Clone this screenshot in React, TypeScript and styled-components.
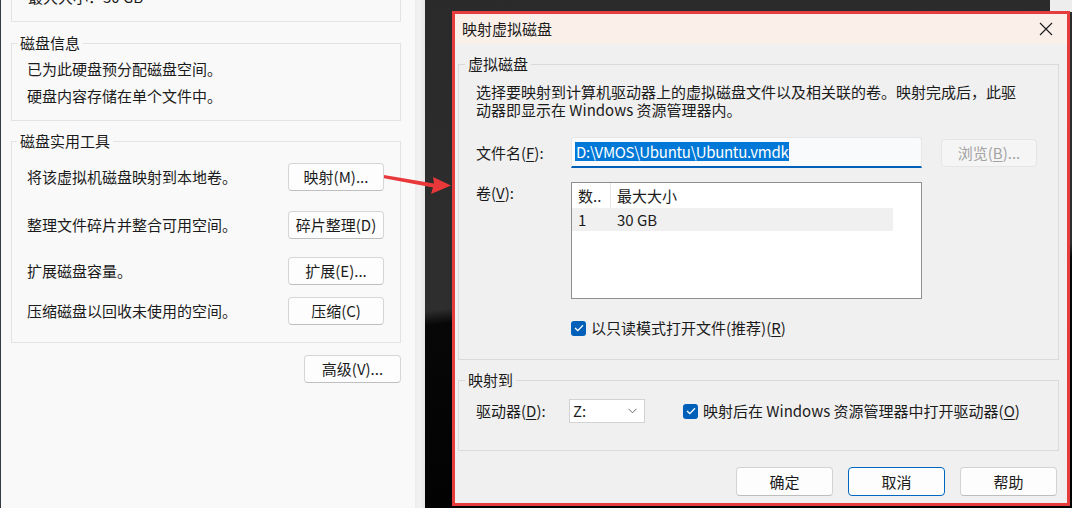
import React from "react";
import styled, { createGlobalStyle } from "styled-components";

const uiFont = `"Segoe UI", "Noto Sans CJK SC", "Noto Sans", sans-serif`;

const GlobalStyle = createGlobalStyle`
  html, body {
    margin: 0;
    padding: 0;
    background: #2b2b2b;
  }
  body {
    font-family: ${uiFont};
    color: #1b1b1b;
  }
`;

const Screen = styled.div`
  position: relative;
  display: flex;
  width: 1072px;
  height: 508px;
  overflow: hidden;
  font-size: 15px;
  line-height: 20px;
`;

/* ---------- left: disk settings pane ---------- */

const LeftPane = styled.div`
  flex: none;
  width: 415px;
  box-sizing: border-box;
  display: flex;
  flex-direction: column;
  padding: 0 14px 0 10px;
  background: #f9f9f9;
  border-left: 1px solid #343b44;
`;

const CutFrame = styled.div`
  height: 22px;
  box-sizing: border-box;
  border: 1px solid #e3e3e3;
  border-top: none;
  padding-left: 16px;
`;

const CutText = styled.div`
  margin-top: -13px;
`;

const Group = styled.fieldset<{ $pad: string; $top: number; $border: string }>`
  margin: ${(p) => p.$top}px 0 0 0;
  padding: ${(p) => p.$pad};
  border: 1px solid ${(p) => p.$border};
  border-radius: 0;
  min-width: 0;
`;

const Legend = styled.legend<{ $shift: number }>`
  margin-left: ${(p) => p.$shift}px;
  padding: 0 3px;
  line-height: 20px;
`;

const InfoLine = styled.div`
  line-height: 27px;
`;

const ToolRow = styled.div<{ $top: number }>`
  display: flex;
  align-items: center;
  justify-content: space-between;
  margin-top: ${(p) => p.$top}px;
`;

const PaneButton = styled.button<{ $w?: number }>`
  width: ${(p) => p.$w ?? 96}px;
  height: 28px;
  box-sizing: border-box;
  padding: 0;
  font: inherit;
  font-size: 15px;
  line-height: 20px;
  color: #1b1b1b;
  background: #fdfdfd;
  border: 1px solid #d6d6d6;
  border-bottom-color: #bfbfbf;
  border-radius: 4px;
`;

const AdvancedButton = styled(PaneButton)`
  align-self: flex-end;
  margin-top: 12px;
`;

const Gutter = styled.div`
  flex: none;
  width: 10px;
  background: linear-gradient(to right, #ececec, #f2f2f2 40%, #e6e6e6);
`;

/* ---------- right: desktop with the dialog ---------- */

const Desktop = styled.div`
  flex: 1;
  min-width: 0;
  display: flex;
  padding: 11px 2px 2px 27px;
  background:
    linear-gradient(#ededed, #ededed) right top / 22px 12px no-repeat,
    linear-gradient(174deg, #2a2a2a 0%, #2e2e2e 54%, #070707 56.5%, #000 100%);
`;

const Dialog = styled.div`
  flex: 1;
  min-width: 0;
  display: flex;
  flex-direction: column;
  border: 3px solid #e53c3e;
  background: #f0f0f0;
`;

const TitleBar = styled.div`
  flex: none;
  height: 30px;
  display: flex;
  align-items: center;
  justify-content: space-between;
  padding: 0 14px 0 7px;
  background: #faf0e9;
`;

const DialogBody = styled.div`
  flex: 1;
  display: flex;
  flex-direction: column;
  padding: 10px 8px 7px 3px;
`;

const Description = styled.p`
  margin: 0;
  line-height: 18px;
`;

const FieldGrid = styled.div`
  display: grid;
  grid-template-columns: 95px 351px auto;
  margin-top: 18px;
`;

const FieldLabel = styled.div<{ $top?: number }>`
  margin-top: ${(p) => p.$top ?? 0}px;
  align-self: ${(p) => (p.$top === undefined ? "center" : "start")};
`;

const FileInput = styled.div`
  height: 31px;
  box-sizing: border-box;
  display: flex;
  align-items: center;
  padding: 0 3px 1px;
  background: #f8fafc;
  border: 1px solid #e6e6e6;
  border-bottom: 2px solid #005fb8;
  border-radius: 3px 3px 0 0;
  white-space: nowrap;
`;

const Selected = styled.span`
  background: #0078d7;
  color: #fff;
  padding: 0 1px;
  line-height: 19px;
  letter-spacing: -0.3px;
`;

const DisabledButton = styled.div`
  align-self: center;
  width: 96px;
  height: 28px;
  margin-left: 19px;
  box-sizing: border-box;
  display: flex;
  align-items: center;
  justify-content: center;
  color: #a3a3a3;
  background: #f5f5f5;
  border: 1px solid #e5e5e5;
  border-radius: 4px;
`;

const ListBox = styled.div`
  grid-column: 2;
  height: 117px;
  box-sizing: border-box;
  margin-top: 14px;
  background: #fff;
  border: 1px solid #8f8f8f;
`;

const ListRow = styled.div<{ $header?: boolean }>`
  display: grid;
  grid-template-columns: 39px 282px;
  width: 321px;
  height: ${(p) => (p.$header ? 25 : 23)}px;
  background: ${(p) => (p.$header ? "#fff" : "#f0f0f0")};
`;

const Cell = styled.div<{ $divider?: boolean }>`
  display: flex;
  align-items: center;
  padding-left: 6px;
  border-right: ${(p) => (p.$divider ? "1px solid #e5e5e5" : "none")};
  white-space: nowrap;
  overflow: hidden;
`;

const CheckRow = styled.label<{ $col?: number; $top?: number }>`
  grid-column: ${(p) => p.$col ?? "auto"};
  display: flex;
  align-items: center;
  gap: 5px;
  margin-top: ${(p) => p.$top ?? 0}px;
  white-space: nowrap;
`;

const Box = styled.span`
  flex: none;
  width: 15px;
  height: 15px;
  border-radius: 3px;
  background: #005fb8;
  display: flex;
  align-items: center;
  justify-content: center;
`;

const DriveRow = styled.div`
  display: flex;
  align-items: center;
  height: 24px;
`;

const DriveLabel = styled.div`
  width: 93px;
`;

const Select = styled.div`
  flex: none;
  width: 76px;
  height: 24px;
  box-sizing: border-box;
  display: flex;
  align-items: center;
  justify-content: space-between;
  padding: 0 7px 0 3px;
  background: #fff;
  border: 1px solid #d2d2d2;
  margin-right: 38px;
`;

const ButtonBar = styled.div`
  display: flex;
  justify-content: flex-end;
  gap: 15px;
  margin-top: 16px;
  padding-right: 2px;
`;

const DialogButton = styled.button<{ $focus?: boolean }>`
  width: 97px;
  height: 29px;
  box-sizing: border-box;
  padding: 0;
  font: inherit;
  font-size: 15px;
  line-height: 20px;
  color: #1b1b1b;
  background: #fdfdfd;
  border: 1px solid ${(p) => (p.$focus ? "#0067c0" : "#d3d3d3")};
  border-bottom-color: ${(p) => (p.$focus ? "#0067c0" : "#bdbdbd")};
  border-radius: 4px;
`;

const U = styled.span`
  text-decoration: underline;
  text-underline-offset: 2px;
`;

const ArrowSvg = styled.svg`
  position: absolute;
  left: 380px;
  top: 165px;
  width: 80px;
  height: 35px;
  pointer-events: none;
`;

const Check = () => (
  <svg width="10" height="8" viewBox="0 0 10 8">
    <polyline points="1,4 3.8,6.6 9,1.2" fill="none" stroke="#fff" strokeWidth="1.3" />
  </svg>
);

const Close = () => (
  <svg width="14" height="14" viewBox="0 0 14 14">
    <path d="M1 1 L13 13 M13 1 L1 13" stroke="#1a1a1a" strokeWidth="1.1" />
  </svg>
);

const Chevron = () => (
  <svg width="9" height="6" viewBox="0 0 9 6">
    <polyline points="0.5,0.8 4.5,4.8 8.5,0.8" fill="none" stroke="#6b6b6b" strokeWidth="1" />
  </svg>
);

const tools = [
  { text: "将该虚拟机磁盘映射到本地卷。", btn: "映射(M)...", top: 12 },
  { text: "整理文件碎片并整合可用空间。", btn: "碎片整理(D)", top: 20 },
  { text: "扩展磁盘容量。", btn: "扩展(E)...", top: 18 },
  { text: "压缩磁盘以回收未使用的空间。", btn: "压缩(C)", top: 12 },
];

export default function App() {
  return (
    <Screen>
      <GlobalStyle />
      <LeftPane>
        <CutFrame>
          <CutText>最大大小：30 GB</CutText>
        </CutFrame>
        <Group $top={11} $pad="2px 15px 11px 15px" $border="#e3e3e3">
          <Legend $shift={-10}>磁盘信息</Legend>
          <InfoLine>已为此硬盘预分配磁盘空间。</InfoLine>
          <InfoLine>硬盘内容存储在单个文件中。</InfoLine>
        </Group>
        <Group $top={10} $pad="0 16px 17px 15px" $border="#e3e3e3">
          <Legend $shift={-10}>磁盘实用工具</Legend>
          {tools.map((t) => (
            <ToolRow key={t.btn} $top={t.top}>
              <span>{t.text}</span>
              <PaneButton>{t.btn}</PaneButton>
            </ToolRow>
          ))}
        </Group>
        <AdvancedButton $w={97}>高级(V)...</AdvancedButton>
      </LeftPane>
      <Gutter />
      <Desktop>
        <Dialog>
          <TitleBar>
            <span>映射虚拟磁盘</span>
            <Close />
          </TitleBar>
          <DialogBody>
            <Group $top={0} $pad="9px 10px 21px 17px" $border="#dadada">
              <Legend $shift={-11}>虚拟磁盘</Legend>
              <Description>
                选择要映射到计算机驱动器上的虚拟磁盘文件以及相关联的卷。映射完成后，此驱
                <br />
                动器即显示在 Windows 资源管理器内。
              </Description>
              <FieldGrid>
                <FieldLabel>
                  文件名(<U>F</U>):
                </FieldLabel>
                <FileInput>
                  <Selected>D:\VMOS\Ubuntu\Ubuntu.vmdk</Selected>
                </FileInput>
                <DisabledButton>
                  浏览(<U>B</U>)...
                </DisabledButton>
                <FieldLabel $top={15}>
                  卷(<U>V</U>):
                </FieldLabel>
                <ListBox>
                  <ListRow $header>
                    <Cell $divider>数..</Cell>
                    <Cell>最大大小</Cell>
                  </ListRow>
                  <ListRow>
                    <Cell>1</Cell>
                    <Cell>30 GB</Cell>
                  </ListRow>
                </ListBox>
                <span />
                <CheckRow $col={2} $top={19}>
                  <Box>
                    <Check />
                  </Box>
                  <span>
                    以只读模式打开文件(推荐)(<U>R</U>)
                  </span>
                </CheckRow>
              </FieldGrid>
            </Group>
            <Group $top={10} $pad="9px 10px 27px 17px" $border="#dadada">
              <Legend $shift={-11}>映射到</Legend>
              <DriveRow>
                <DriveLabel>
                  驱动器(<U>D</U>):
                </DriveLabel>
                <Select>
                  <span>Z:</span>
                  <Chevron />
                </Select>
                <CheckRow>
                  <Box>
                    <Check />
                  </Box>
                  <span>
                    映射后在 Windows 资源管理器中打开驱动器(<U>O</U>)
                  </span>
                </CheckRow>
              </DriveRow>
            </Group>
            <ButtonBar>
              <DialogButton>确定</DialogButton>
              <DialogButton $focus>取消</DialogButton>
              <DialogButton>帮助</DialogButton>
            </ButtonBar>
          </DialogBody>
        </Dialog>
      </Desktop>
      <ArrowSvg viewBox="380 165 80 35">
        <polygon
          points="384,175 434,183.5 433,177 451,185.5 431,194 433,187.5 384,178.2"
          fill="#e8383a"
        />
      </ArrowSvg>
    </Screen>
  );
}
